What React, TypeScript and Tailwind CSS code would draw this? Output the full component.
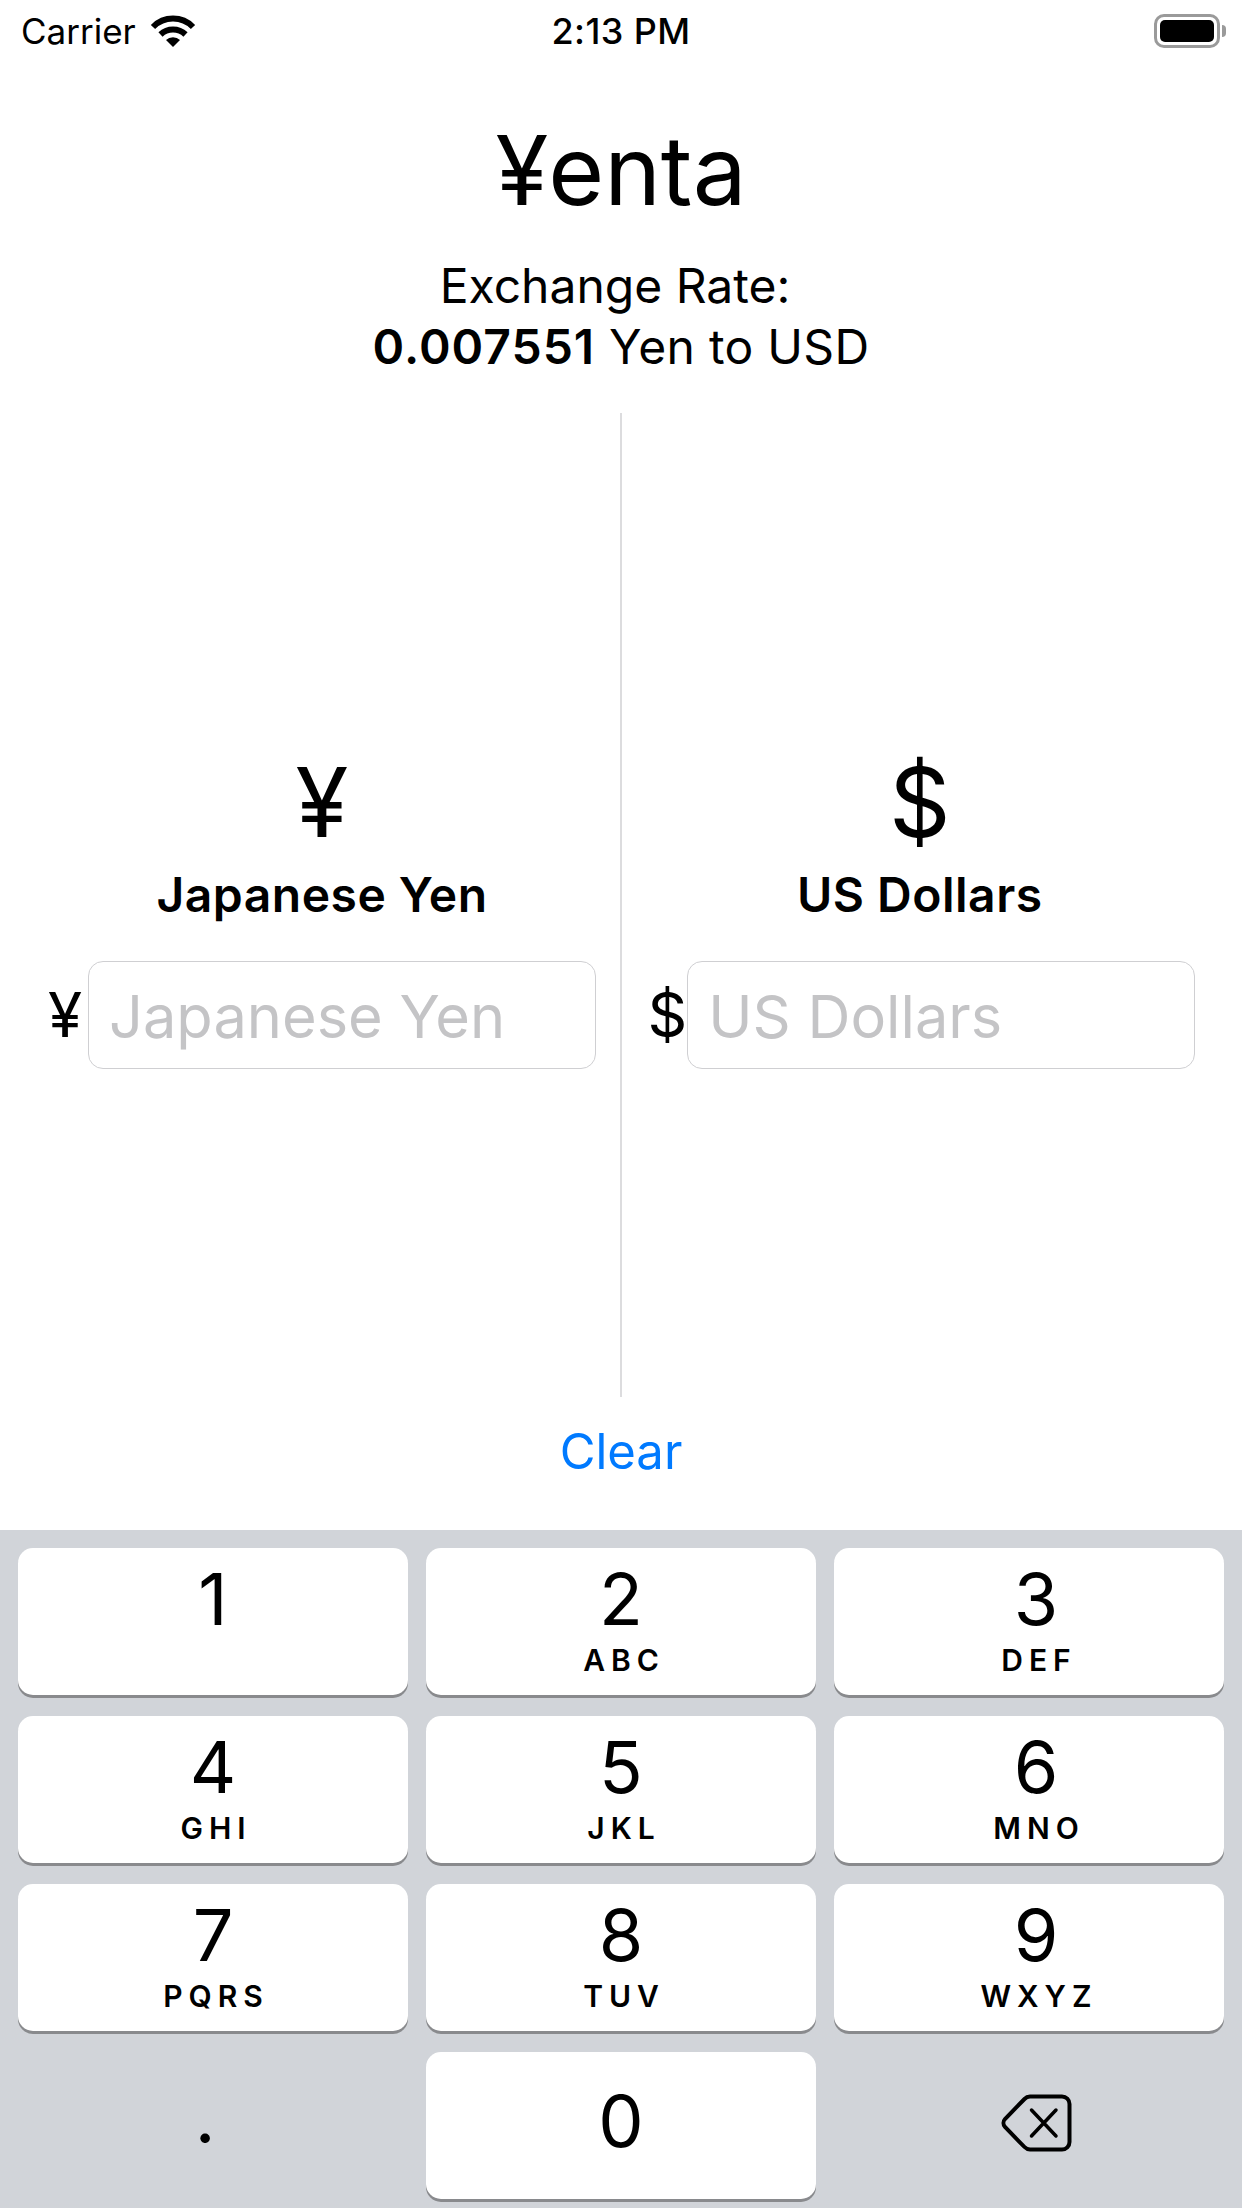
import { useState } from 'react'

const keys = [
  { digit: '1', letters: '' },
  { digit: '2', letters: 'ABC' },
  { digit: '3', letters: 'DEF', shift: true },
  { digit: '4', letters: 'GHI' },
  { digit: '5', letters: 'JKL' },
  { digit: '6', letters: 'MNO', shift: true },
  { digit: '7', letters: 'PQRS' },
  { digit: '8', letters: 'TUV' },
  { digit: '9', letters: 'WXYZ', shift: true },
]

function WifiIcon() {
  return (
    <svg width="46" height="34" viewBox="0 0 46 34" className="ml-[14px]">
      <path d="M3 13 A28 28 0 0 1 43 13" fill="none" stroke="#000" strokeWidth="6" />
      <path d="M10.5 20.5 A18 18 0 0 1 35.5 20.5" fill="none" stroke="#000" strokeWidth="6" />
      <path d="M16 26 A10 10 0 0 1 30 26 L23 33 Z" fill="#000" />
    </svg>
  )
}

function BatteryIcon() {
  return (
    <div className="flex items-center">
      <div className="h-[34px] w-[66px] rounded-[10px] border-[3px] border-[#9a9a9a] p-[3px]">
        <div className="h-full w-full rounded-[5px] bg-black" />
      </div>
      <div className="ml-[2px] h-[12px] w-[4px] rounded-r-[4px] bg-[#9a9a9a]" />
    </div>
  )
}

function BackspaceIcon() {
  return (
    <svg width="72" height="62" viewBox="0 0 72 62">
      <path
        d="M30 4.5 H62 A7.5 7.5 0 0 1 69.5 12 V50 A7.5 7.5 0 0 1 62 57.5 H30 A8 8 0 0 1 24.5 55 L5 35 A6 6 0 0 1 5 27 L24.5 7 A8 8 0 0 1 30 4.5 Z"
        fill="none"
        stroke="#000"
        strokeWidth="4"
      />
      <path d="M31.5 18 L56 44 M56 18 L31.5 44" fill="none" stroke="#000" strokeWidth="3.5" strokeLinecap="round" />
    </svg>
  )
}

function Key({ digit, letters, shift }: { digit: string; letters?: string; shift?: boolean }) {
  return (
    <button
      className={`flex h-[147px] flex-col items-center rounded-[15px] bg-white text-black shadow-[0_3px_0_#898a8d] ${
        digit === '0' ? 'pt-[33px]' : 'pt-[15px]'
      } ${shift ? 'pl-[14px]' : ''}`}
    >
      <span className="text-[72px] leading-[72px]">{digit}</span>
      {letters && (
        <span className="mt-[10px] pl-[6px] text-[30px] leading-[30px] font-semibold tracking-[6px]">
          {letters}
        </span>
      )}
    </button>
  )
}

function CurrencyColumn({
  symbol,
  label,
  value,
  onChange,
  className,
}: {
  symbol: string
  label: string
  value: string
  onChange: (v: string) => void
  className: string
}) {
  return (
    <div className={`flex min-w-0 flex-col items-center pt-[341px] ${className}`}>
      <div className="text-[96px] leading-[96px]">{symbol}</div>
      <div className="mt-[15px] text-[48px] leading-[60px] font-semibold tracking-[0.5px]">{label}</div>
      <div className="mt-[36px] flex w-full items-center justify-between">
        <span className="text-[62px] leading-[60px]">{symbol}</span>
        <input
          value={value}
          onChange={(e) => onChange(e.target.value)}
          placeholder={label}
          className="h-[108px] w-[508px] rounded-[15px] border-[1.5px] border-[#cfcfd2] pl-[20px] pt-[2px] text-[59.5px] outline-none placeholder:text-[#c4c4c6]"
        />
      </div>
    </div>
  )
}

export default function App() {
  const [yen, setYen] = useState('')
  const [usd, setUsd] = useState('')

  return (
    <div className="flex h-[2208px] w-[1242px] flex-col overflow-hidden bg-white font-['Inter',sans-serif] text-black">
      {/* status bar */}
      <div className="grid h-[62px] grid-cols-[1fr_auto_1fr] items-center pl-[21px] pr-[16px] text-[35px] leading-[40px]">
        <div className="flex items-center">
          Carrier
          <WifiIcon />
        </div>
        <div className="pr-[5px] text-[36px] font-medium tracking-[0.4px]">2:13 PM</div>
        <div className="flex justify-end">
          <BatteryIcon />
        </div>
      </div>

      <h1 className="mt-[60px] text-center text-[96px] leading-[96px] font-normal">¥enta</h1>
      <div className="mt-[37px] text-center text-[48px] leading-[61px]">
        <div className="pr-[12px]">Exchange Rate:</div>
        <div className="tracking-[0.3px]">
          <span className="font-semibold tracking-[1px]">0.007551</span> Yen to USD
        </div>
      </div>

      <div className="mt-[36px] flex h-[984px]">
        <CurrencyColumn
          symbol="¥"
          label="Japanese Yen"
          value={yen}
          onChange={setYen}
          className="w-[620px] shrink-0 pl-[48px] pr-[24px]"
        />
        <div className="w-[1.5px] shrink-0 bg-[#dcdcde]" />
        <CurrencyColumn
          symbol="$"
          label="US Dollars"
          value={usd}
          onChange={setUsd}
          className="flex-1 pl-[26px] pr-[50px]"
        />
      </div>

      <button
        onClick={() => {
          setYen('')
          setUsd('')
        }}
        className="mt-[25px] text-center text-[49px] leading-[60px] text-[#007aff]"
      >
        Clear
      </button>

      {/* number pad */}
      <div className="mt-[48px] grid flex-1 grid-cols-3 content-start gap-x-[18px] gap-y-[21px] bg-[#d1d4d9] px-[18px] pt-[18px]">
        {keys.map((k) => (
          <Key key={k.digit} digit={k.digit} letters={k.letters} shift={k.shift} />
        ))}
        <div className="flex h-[147px] justify-center pr-[16px] pt-[29px] text-[72px] leading-[72px]">.</div>
        <Key digit="0" />
        <div className="flex h-[147px] items-center justify-center pb-[6px] pl-[14px]">
          <BackspaceIcon />
        </div>
      </div>
    </div>
  )
}
